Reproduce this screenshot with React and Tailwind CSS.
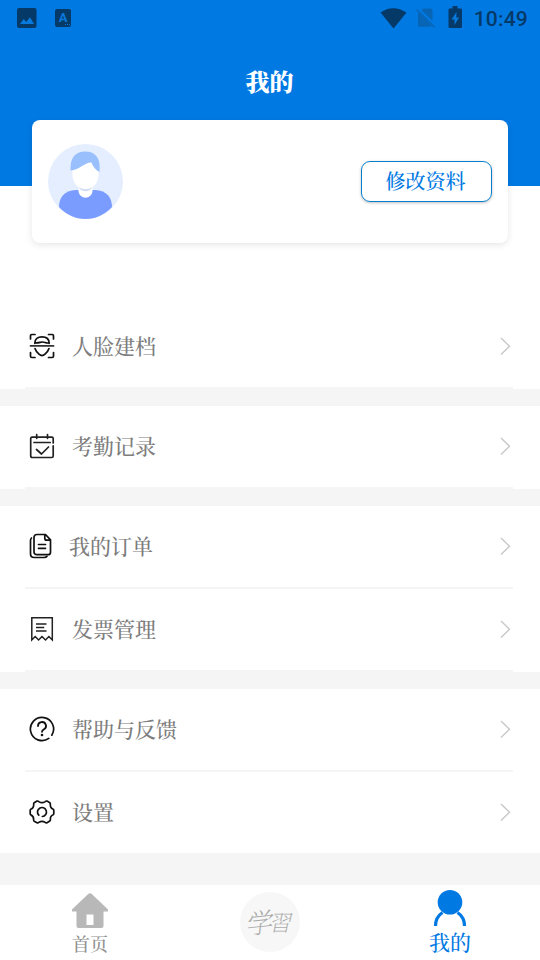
import React from 'react'

const FaceIcon = () => (
    <svg width="26" height="26" viewBox="0 0 26 26" fill="none" stroke="#111" strokeWidth="1.7" strokeLinecap="round">
        <path d="M1.500 6V2.800Q1.500 1.500 2.800 1.500H6M19.500 1.500h3.700q1.300 0 1.300 1.300V6M1.500 19.500v3.700q0 1.300 1.300 1.300H6M24.500 19.500v3.700q0 1.300-1.300 1.300h-3.700" />
        <path d="M5.800 10.300C5.800 6 8.800 3.800 13 3.800s7.200 2.200 7.200 6.500M6 9.800c3.500.5 5.500-.8 7.500-.8 2.500 0 3.500 1.500 6.500.9" />
        <path d="M1.500 12.900h23" stroke="#333" strokeWidth="1.800" />
        <path d="M6 15.500c.7 2.200 2.200 4.100 4 5.700 2.100 1.900 3.900 1.900 6 0 1.800-1.600 3.300-3.500 4-5.700" />
    </svg>
)

const CalendarIcon = () => (
    <svg width="26" height="26" viewBox="0 0 26 26" fill="none" stroke="#222" strokeWidth="1.700" strokeLinecap="round" strokeLinejoin="round">
        <path d="M24.200 10V5.500q0-1.300-1.300-1.300H3Q1.700 4.200 1.700 5.500v17Q1.700 24.500 3.200 24.500h19.500q1.500 0 1.500-1.500V12.800M7.700 1.500v3.800M18.500 1.500v3.800M5 9.500h16.200M7.500 16.500l5 4.500 7-7" />
    </svg>
)

const OrderIcon = () => (
    <svg width="26" height="26" viewBox="0 0 26 26" fill="none" stroke="#111" strokeWidth="1.700" strokeLinecap="round" strokeLinejoin="round">
        <path d="M8 1.500h8.500l5 5.300v12.400q0 2.500-2.500 2.500H8q-3 0-3-2.800V4.500Q5 1.500 8 1.500M15.800 1.700v3.500q0 2 2 2h3.500M9.500 11.500h7M9.500 15.300h7" />
        <path d="M2.500 5Q1.500 6 1.500 7.500v13.200q0 3.800 3.700 3.800h10q2 0 2.800-1.200" />
    </svg>
)

const InvoiceIcon = () => (
    <svg width="26" height="26" viewBox="0 0 26 26" fill="none" stroke="#222" strokeWidth="1.500">
        <path d="M2.800 24V1.800h20.500V24l-3.400-3.500-3.400 3.500-3.500-3.500L9.600 24l-3.400-3.500zM7 8h10.500M7 11.500h8.200M7 15h10.500" />
    </svg>
)

const HelpIcon = () => (
    <svg width="26" height="26" viewBox="0 0 26 26" fill="none" stroke="#111" strokeWidth="1.700" strokeLinecap="round">
        <path d="M19.800 22.400A11.600 11.600 0 1 1 22.800 19.200" />
        <path d="M9 10a4 3.900 0 1 1 6 3.300c-1.300.8-2 1.400-2 2.500" strokeWidth="1.800" />
        <circle cx="13" cy="19" r="1.300" fill="#111" stroke="none" />
    </svg>
)

const SettingIcon = () => (
    <svg width="26" height="26" viewBox="0 0 26 26" fill="none" stroke="#111" strokeWidth="1.700" strokeLinecap="round" strokeLinejoin="round">
        <path d="M8 2.100q1-.3 1.800.5 3.200 2.200 6.400 0 .8-.8 1.800-.5l2.800 1.600q.7.500.5 1.500-.2 4 3 5 .5.200.5 1v3.400q0 .8-.6 1.200-3.200 1.200-2.800 4.800.1 1-.6 1.500L18 23.800q-1 .4-1.800-.4-3.200-2.200-6.400 0-.8.800-1.800.4l-2.800-1.600q-.7-.5-.6-1.500.3-3.600-2.800-4.800-.6-.4-.6-1.200v-3.400q0-.8.500-1 3.200-1 3-5-.2-1 .5-1.500z" />
        <path d="M9.800 16.200A4.500 4.500 0 1 1 13.300 17.500" />
    </svg>
)

const Avatar = () => (
    <svg width="75" height="75" viewBox="0 0 75 75">
        <circle cx="37.500" cy="37.500" r="37.500" fill="#e5eeff" />
        <path d="M11 63c0-9 5-16.500 17-17h19c12 .5 17 8 17 17-7 7.500-16 12-26.500 12S18 70.500 11 63z" fill="#7a9cff" />
        <path d="M30.500 40h14v6.500c0 9.500-14 9.500-14 0z" fill="#fff" />
        <path d="M30.500 42c4 2 10 2 14 0-1 7-13 7-14 0z" fill="#d5def3" />
        <path d="M24.500 22l8-6h14l4 6v9c0 8-5.500 14-13 14s-13-6-13-14z" fill="#fff" />
        <path d="M22.500 26.500C22 14 27 7.500 37 7.500c11 0 16 7 14.500 20.500-4-2-6.500-5.500-8-9.500-8 0-11.500 7.500-21 8z" fill="#99c0fc" />
    </svg>
)

const groups = [
    [{ name: '人脸建档', icon: <FaceIcon /> }],
    [{ name: '考勤记录', icon: <CalendarIcon /> }],
    [{ name: '我的订单', icon: <OrderIcon />, tight: true }, { name: '发票管理', icon: <InvoiceIcon /> }],
    [{ name: '帮助与反馈', icon: <HelpIcon /> }, { name: '设置', icon: <SettingIcon /> }],
]

const StatusBar = () => (
    <div className="flex h-9 items-center pl-[17px] pr-3 text-[#043968]">
        <svg width="20" height="20" viewBox="0 0 20 20">
            <rect x="0" y="0" width="19.500" height="20" rx="2" fill="currentColor" />
            <path d="M3 16l3.700-5 2.500 3 3.800-4.800 4 6.800z" fill="#0879dc" />
        </svg>
        <div className="ml-[18px] flex h-[18px] w-4 flex-col items-center rounded-[2px] bg-[#043968] font-['Roboto',sans-serif] text-[13px] font-bold leading-[17px] text-[#0879dc]">
            A
            <span className="-mt-[2px] ml-2 flex gap-px"><i className="size-px bg-[#0879dc]" /><i className="size-px bg-[#0879dc]" /><i className="size-px bg-[#0879dc]" /></span>
        </div>
        <svg className="ml-auto" width="27" height="21" viewBox="0 0 27 21">
            <path d="M.5 4.500Q13-4 26.500 4.500L13.500 20.500z" fill="currentColor" />
        </svg>
        <svg className="ml-[9px]" width="20" height="20" viewBox="0 0 20 20" fill="#0865b5">
            <path d="M2.500 4.500L16 18q-.5.800-1.500.8h-11q-1.500 0-1.500-1.500V5zM5.500 2l2-1.500h7q2 0 2 2v10.500z" />
            <path d="M.5 1.500L19 19.500" stroke="#0865b5" strokeWidth="1.500" />
        </svg>
        <svg className="-mt-[2px] ml-[12px]" width="15" height="22" viewBox="0 0 15 22">
            <path d="M4.500 0h5v2.500h3.200q1.300 0 1.300 1.300v16.900q0 1.300-1.300 1.300H1.800Q.5 22 .5 20.700V3.800Q.5 2.500 1.800 2.500h2.700z" fill="currentColor" />
            <path d="M8.500 6L3.500 13.500h3V19L11 11.500H8.300z" fill="#0879dc" />
        </svg>
        <span className="ml-[11px] mt-px font-['Roboto',sans-serif] text-[21px] font-medium leading-6 tracking-[0.2px]">10:49</span>
    </div>
)

const MenuRow = ({ item, last }) => {
    return <button className={last ? 'flex h-[81px] w-full flex-col bg-white pl-[25px] pr-[27px] text-left' : 'flex h-[83px] w-full flex-col bg-white pl-[25px] pr-[27px] text-left'}>
        <div className="flex h-[81px] w-full shrink-0 items-center pb-[2px] pl-1">
            {item.icon}
            <span className={item.tight ? '-mt-[2px] ml-[14px]' : '-mt-[2px] ml-[17px]'}>{item.name}</span>
            <svg className="ml-auto" width="18" height="20" viewBox="0 0 18 20" fill="none" stroke="#c8c8c8" strokeWidth="1.400">
                <path d="M6 2l8.500 8.300-8.500 8.300" />
            </svg>
        </div>
        {!last && <div className="h-0.5 w-full bg-[#f5f5f5]" />}
    </button>
}

const App = () => {
    return <div className="flex h-[960px] w-[540px] flex-col overflow-hidden bg-[#f5f5f5] font-['Noto_Serif_CJK_SC','Noto_Sans_CJK_SC',serif]">
        <header className="h-[186px] shrink-0 bg-[#0079e3]">
            <StatusBar />
            <h1 className="mt-[27px] pr-px text-center text-2xl font-black leading-9 text-white">我的</h1>
        </header>
        <section className="h-[120px] shrink-0 bg-white px-8">
            <div className="relative -mt-[66px] flex h-[123px] items-center justify-between rounded-lg bg-white px-4 shadow-[0_2px_7px_rgba(0,0,0,0.1)]">
                <Avatar />
                <button className="h-[41px] w-[131px] rounded-[9px] border border-[#087fca] pb-[2px] pr-[2px] text-[20px] font-medium leading-9 text-[#0079e3] shadow-[0_1px_3px_rgba(0,0,0,0.25)]">修改资料</button>
            </div>
        </section>
        <main className="flex h-[579px] shrink-0 flex-col text-[21px] font-medium leading-[30px] text-[#7d7d7d]">
            {groups.map((group, i) => (
                <div key={i} className={i === 3 ? 'shrink-0' : 'mb-[17px] shrink-0'}>
                    {group.map((item, j) => (
                        <MenuRow key={item.name} item={item} last={i === 3 && j === 1} />
                    ))}
                </div>
            ))}
        </main>
        <nav className="grid h-[75px] shrink-0 grid-cols-3 bg-white">
            <button className="flex flex-col items-center pt-2 text-[18px] font-medium leading-[26px] text-[#909090]">
                <svg width="36" height="36" viewBox="0 0 36 36">
                    <path d="M16.500.8Q18-.5 19.500.8L36 16.500v2h-4.500V33q0 2-2 2h-23q-2 0-2-2V18.500H0v-2z" fill="#b8b8b8" />
                    <path d="M14.500 21.500h7v10.500h-7z" fill="#fff" />
                </svg>
                <span className="mt-px">首页</span>
            </button>
            <button className="mt-[7px] flex size-[60px] items-center justify-center justify-self-center rounded-full bg-[#f7f7f7] font-extralight text-[#aaa]">
                <span className="-skew-x-12 -rotate-6 text-[27px] leading-8">学</span>
                <span className="-ml-[3px] -skew-x-12 text-[22px] leading-8">習</span>
            </button>
            <button className="flex flex-col items-center pt-[5px] text-[21px] font-medium leading-[30px] text-[#0079e3]">
                <svg width="34" height="36" viewBox="0 0 34 36">
                    <circle cx="17" cy="12.300" r="12.300" fill="currentColor" />
                    <path d="M2.500 36c0-6 2.500-10.500 7-13.500M31.500 36c0-6-2.500-10.500-7-13.500" fill="none" stroke="currentColor" strokeWidth="3.200" />
                </svg>
                <span>我的</span>
            </button>
        </nav>
    </div>
}

export default App
